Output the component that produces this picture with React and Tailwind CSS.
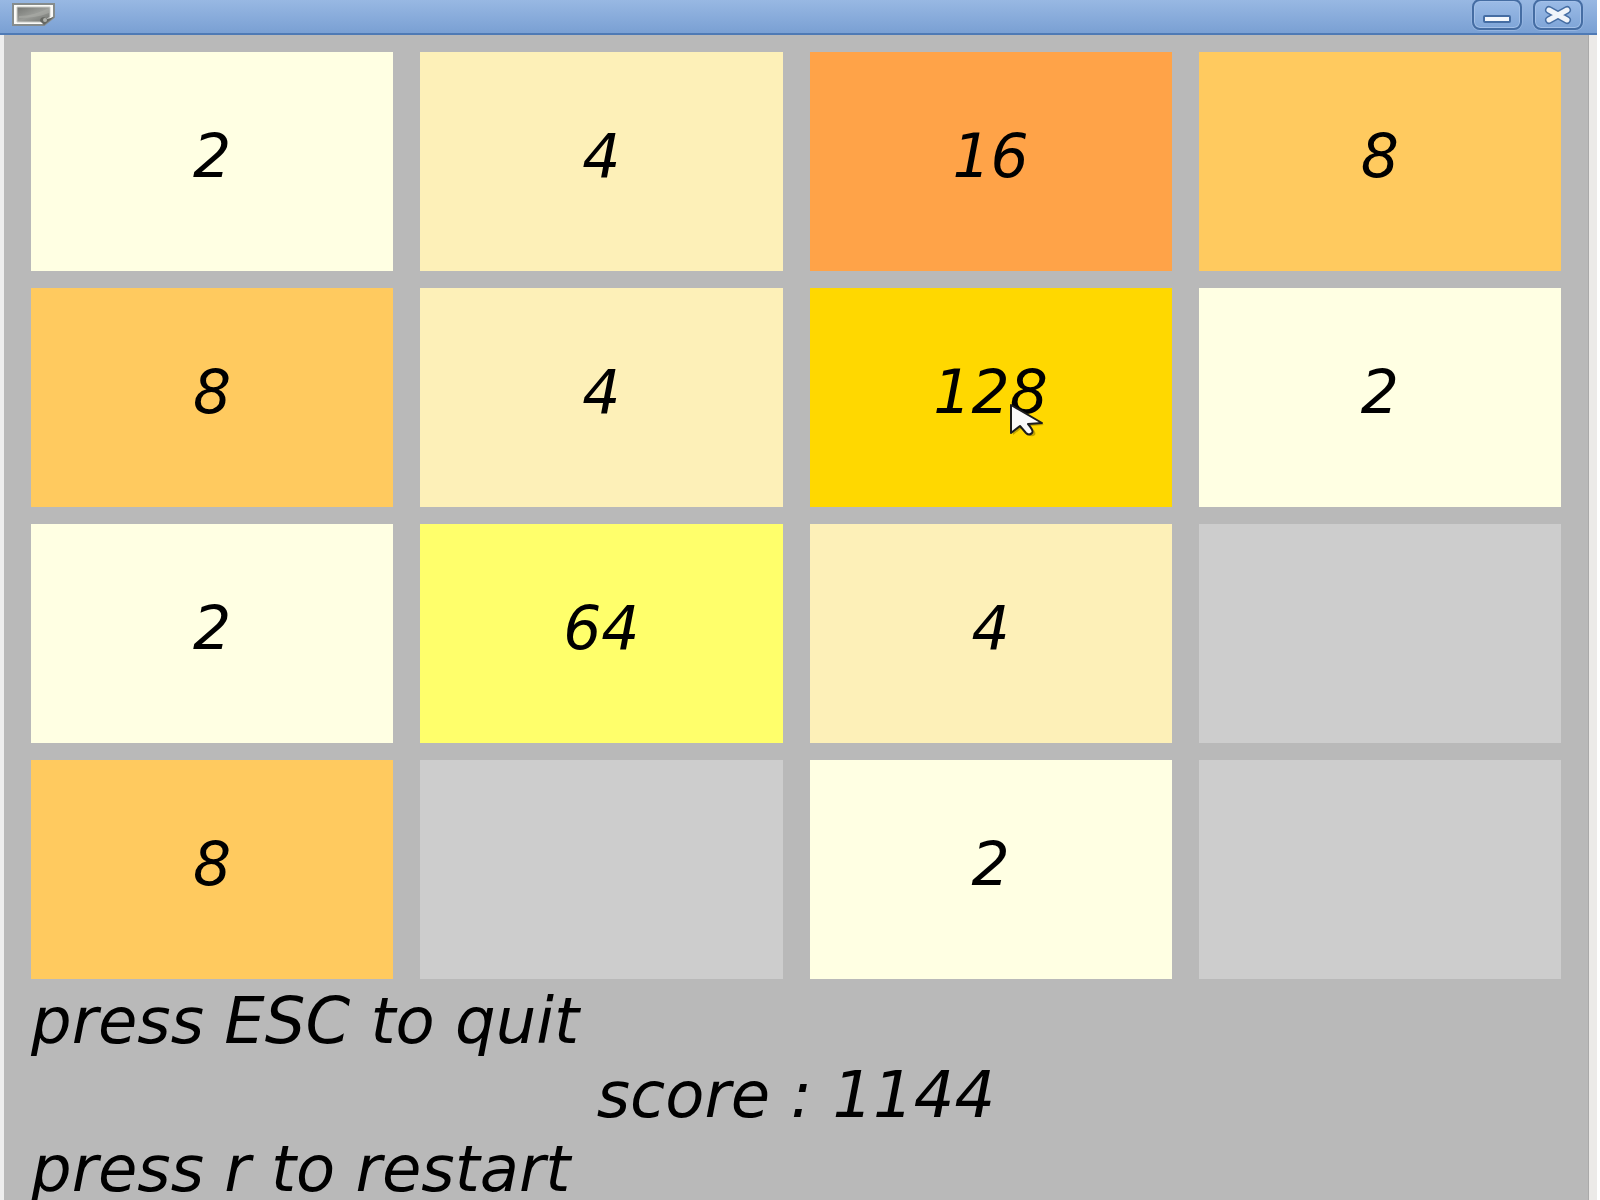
const TILE_COLORS = {
  0: "bg-[#cdcdcd]",
  2: "bg-[#ffffe3]",
  4: "bg-[#fdf0b8]",
  8: "bg-[#ffca5f]",
  16: "bg-[#ffa348]",
  64: "bg-[#ffff6b]",
  128: "bg-[#ffd800]",
};

const BOARD = [
  [2, 4, 16, 8],
  [8, 4, 128, 2],
  [2, 64, 4, 0],
  [8, 0, 2, 0],
];

function WindowIcon() {
  return (
    <svg width="46" height="27" viewBox="0 0 46 27" className="mt-px" aria-hidden="true">
      <defs>
        <linearGradient id="screen" x1="0" y1="0" x2="1" y2="1">
          <stop offset="0" stopColor="#747672" />
          <stop offset="0.5" stopColor="#9a9c98" />
          <stop offset="1" stopColor="#70726e" />
        </linearGradient>
      </defs>
      <path d="M2 3H43V16L33 24H2Z" fill="#fbfbf8" stroke="#868c8c" strokeWidth="2" />
      <path d="M6 6H39V16L32 21H6Z" fill="url(#screen)" stroke="#c9cac6" strokeWidth="1" />
      <path d="M8 15C18 15 28 12 38 7V12C28 16 18 17 8 17Z" fill="#abada8" opacity="0.6" />
      <path d="M43 16L33 24L29 20C29 16 33 15 36 18Z" fill="#656762" />
      <circle cx="34" cy="19" r="2" fill="#b0b2ad" />
    </svg>
  );
}

function TitleButton({ label, children }) {
  return (
    <button
      type="button"
      aria-label={label}
      className="flex h-[31px] w-[50px] items-center justify-center rounded-lg border-2 border-[#456da3] bg-linear-to-b from-[#9bbbe6] to-[#7fa5d8] shadow-[inset_0_0_0_1px_#a3c0e8,0_0_0_1px_#94b4e0]"
    >
      {children}
    </button>
  );
}

function Pointer() {
  return (
    <svg width="38" height="34" viewBox="0 0 38 34" className="absolute left-[55%] top-[53%]" aria-hidden="true">
      <path
        d="M3 2V30L12 23L17 29Q21 33 25 30Q27 27 20 21L34 20Z"
        fill="#000"
        opacity="0.25"
        transform="translate(1 1)"
      />
      <path
        d="M2 1V29L11 22L17 29Q20 32 23 29Q25 27 19 20L33 19Z"
        fill="#fafafa"
        stroke="#1c1c1c"
        strokeWidth="2"
        strokeLinejoin="round"
      />
    </svg>
  );
}

function Tile({ value }) {
  return (
    <div className={`relative flex items-center justify-center pb-3 ${TILE_COLORS[value]}`}>
      {value > 0 && <span>{value}</span>}
      {value === 128 && <Pointer />}
    </div>
  );
}

export default function App() {
  return (
    <div className="flex h-screen flex-col overflow-hidden bg-white pr-[3px] text-black">
      <header className="flex h-[35px] shrink-0 items-start justify-between border-b-2 border-[#4f7ab5] bg-linear-to-b from-[#98b8e3] to-[#7aa0d3] pl-[11px] pr-[14px]">
        <WindowIcon />
        <div className="-mt-px flex gap-[11px]">
          <TitleButton label="Minimize">
            <svg width="28" height="8" viewBox="0 0 28 8" className="mt-2" aria-hidden="true">
              <rect x="1" y="1" width="26" height="6" rx="1" fill="#f5f8fc" stroke="#456da3" strokeWidth="2" />
            </svg>
          </TitleButton>
          <TitleButton label="Close">
            <svg width="30" height="20" viewBox="0 0 30 20" aria-hidden="true">
              <path d="M6 5L24 15M24 5L6 15" stroke="#456da3" strokeWidth="8" strokeLinecap="round" />
              <path d="M6 5L24 15M24 5L6 15" stroke="#f0f4fa" strokeWidth="5" strokeLinecap="round" />
            </svg>
          </TitleButton>
        </div>
      </header>
      <main className="flex-1 border-l-4 border-r-8 border-l-[#eeeeee] border-r-[#eceae8] bg-[#b9b9b9] pl-[27px] pr-[28px] pt-[17px] font-['DejaVu_Sans','Liberation_Sans',sans-serif] italic shadow-[inset_-1px_0_0_#aaaaaa]">
        <div className="grid auto-rows-[219px] grid-cols-4 gap-x-[27px] gap-y-[17px] text-[60px] leading-none">
          {BOARD.flat().map((value, i) => (
            <Tile key={i} value={value} />
          ))}
        </div>
        <div className="flex flex-col gap-[18px] pt-[14px] text-[64px] leading-[56px]">
          <p>press ESC to quit</p>
          <p className="text-center">score : 1144</p>
          <p>press r to restart</p>
        </div>
      </main>
    </div>
  );
}
